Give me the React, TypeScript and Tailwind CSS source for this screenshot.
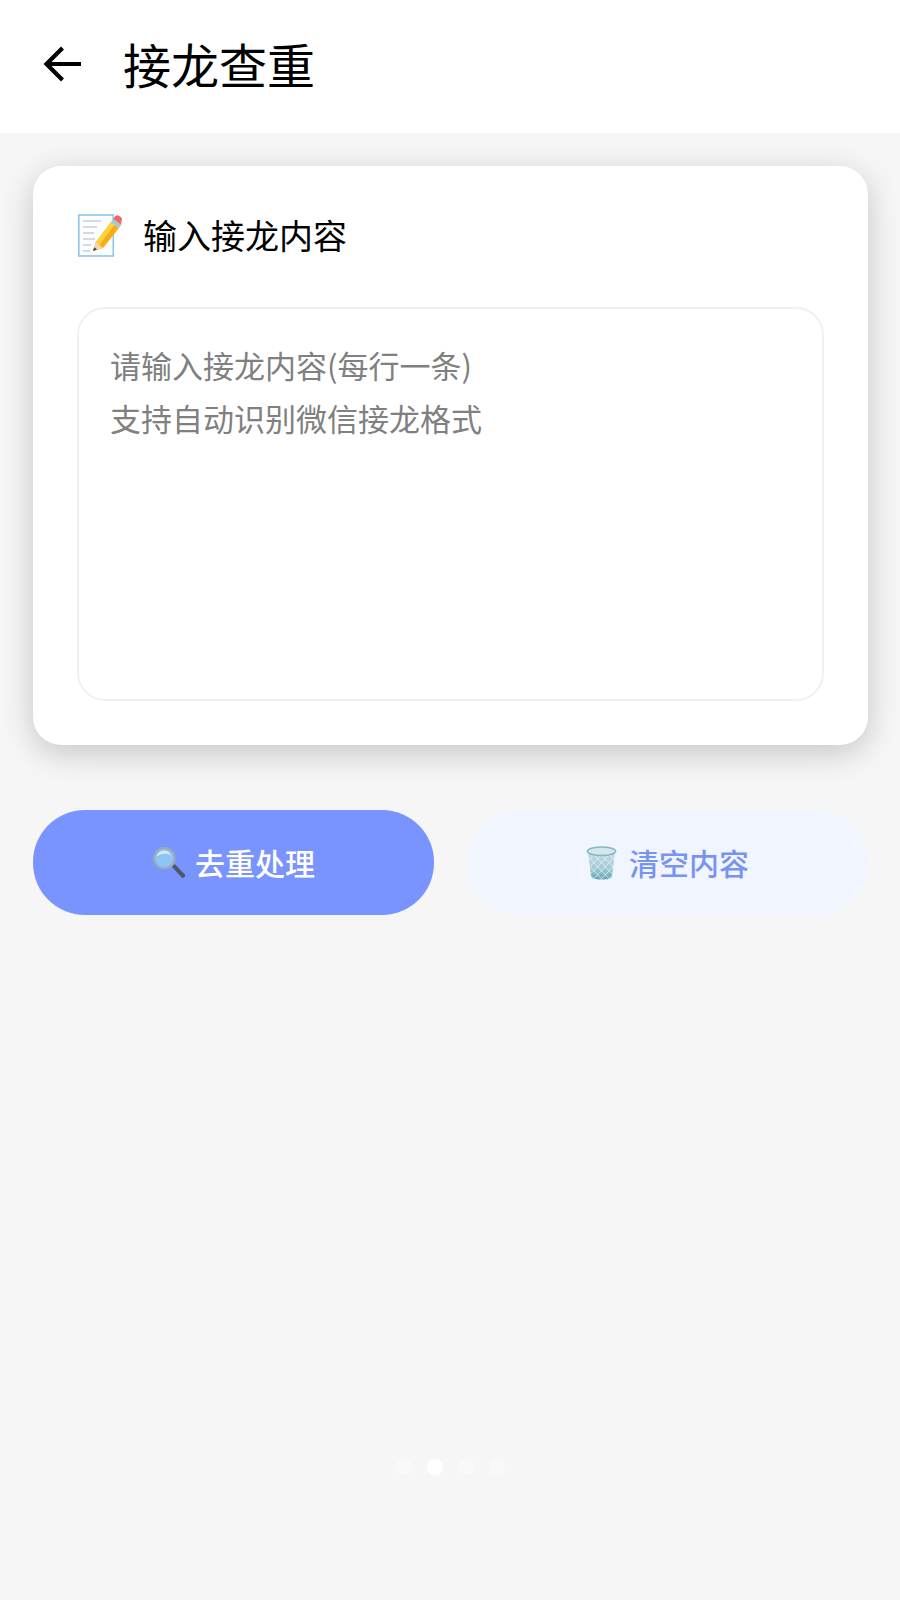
import React from "react";

const cjk = "font-['Noto_Sans_CJK_SC','Noto_Sans',sans-serif]";

function BackArrow() {
  return (
    <svg width="40" height="40" viewBox="0 0 40 40" fill="none" stroke="#000" strokeWidth="4.2">
      <path d="M39 20H5" />
      <path d="M20.500 4L4.500 20l16 16" />
    </svg>
  );
}

function MemoIcon() {
  return (
    <svg width="44" height="44" viewBox="0 0 44 44" className="ml-[1px] shrink-0">
      <rect x="0.800" y="2" width="34.500" height="41" fill="#fbfdff" stroke="#8cc6ea" strokeWidth="1.600" />
      <path d="M5 8h18M5 14h14M5 20h11M5 26h12M5 32h8M5 38h7" stroke="#b5b5b5" strokeWidth="1" />
      <path d="M15 38l3-9L33 9l8 6-16 20z" fill="#f7ae16" />
      <path d="M18 29L33 9l3.500 2.700-15 20z" fill="#fdd23f" />
      <path d="M15 38l3-9 7 6z" fill="#f3d7a8" />
      <path d="M15 38l1.200-3.800 2.800 2.300z" fill="#3f3f3f" />
      <path d="M33 9l2.200-3 8 6-2.200 3z" fill="#9ccbdc" />
      <path d="M35.200 6l1.800-2.500c1-1.300 2.800-1.600 4.200-.6l1.600 1.200c1.300 1 1.600 2.800.6 4.200L43.200 12z" fill="#ec6a6a" />
    </svg>
  );
}

function SearchIcon() {
  return (
    <svg width="34" height="34" viewBox="0 0 36 36" className="shrink-0">
      <path d="M21 22l3-3 11 11.500c1 1.200-2 4.200-3.200 3.200z" fill="#4b5a66" />
      <circle cx="13" cy="13" r="12" fill="#9aa9b4" />
      <circle cx="13" cy="13" r="9.800" fill="#8cc5f3" />
      <path d="M5 11c1-4 4.500-6 8-6s6 2 7 5c-4-2.500-10-2.500-15 1z" fill="#d5ebfb" />
    </svg>
  );
}

function TrashIcon() {
  return (
    <svg width="31" height="34" viewBox="0 0 34 36" preserveAspectRatio="none" className="shrink-0">
      <defs>
        <linearGradient id="bin" x1="0" y1="0" x2="0" y2="1">
          <stop offset="0" stopColor="#c4dde3" />
          <stop offset="0.6" stopColor="#a5cbd5" />
          <stop offset="1" stopColor="#5fa3b3" />
        </linearGradient>
        <pattern id="mesh" width="6" height="6" patternUnits="userSpaceOnUse" patternTransform="rotate(45)">
          <path d="M0 0h6M0 0v6" stroke="#e6f2f5" strokeWidth="1.600" strokeOpacity="0.8" />
        </pattern>
      </defs>
      <path d="M2 5l3.500 27c.3 2.500 5 3.500 11.500 3.500S28.200 34.500 28.500 32L32 5z" fill="url(#bin)" />
      <path d="M2 5l3.500 27c.3 2.500 5 3.500 11.500 3.500S28.200 34.500 28.500 32L32 5z" fill="url(#mesh)" />
      <ellipse cx="17" cy="5.500" rx="15.500" ry="4.500" fill="#d3e6ea" stroke="#85b7c3" strokeWidth="1.600" />
    </svg>
  );
}

export default function App() {
  return (
    <div className={`flex h-[1600px] w-[900px] flex-col bg-[#f6f6f6] ${cjk}`}>
      {/* Title bar */}
      <div className="flex h-[133px] shrink-0 items-center bg-white pb-[5px] pl-[42px]">
        <BackArrow />
        <h1 className="mb-[3px] ml-[41px] text-[48px] leading-none font-normal text-black">接龙查重</h1>
      </div>

      <div className="flex flex-1 flex-col pt-[33px] pl-[33px]">
        {/* Input card */}
        <div className="flex h-[579px] w-[835px] flex-col rounded-[28px] bg-white px-[44px] pt-[46px] pb-[44px] shadow-[0_8px_32px_rgba(0,0,0,0.2)]">
          <div className="flex h-[46px] items-center gap-[21px]">
            <MemoIcon />
            <span className="text-[34px] leading-none font-normal text-black">输入接龙内容</span>
          </div>
          <div className="mt-[49px] flex-1 rounded-[28px] border-2 border-[#f0f0f0] px-[31px] pt-[29px] text-[31px] leading-[53px] text-[#808080]">
            <p>请输入接龙内容(每行一条)</p>
            <p>支持自动识别微信接龙格式</p>
          </div>
        </div>

        {/* Actions */}
        <div className="mt-[65px] flex w-[835px] gap-[33px]">
          <button className="flex h-[105px] flex-1 items-center justify-center gap-[9px] rounded-[52px] bg-[#7993ff] text-[30px] font-medium text-white">
            <SearchIcon />
            去重处理
          </button>
          <button className="flex h-[105px] flex-1 items-center justify-center gap-[12px] rounded-[52px] bg-[#f1f5ff] text-[30px] font-medium text-[#7993f0]">
            <TrashIcon />
            清空内容
          </button>
        </div>

        {/* Pager dots */}
        <div className="mt-auto mb-[125px] ml-[-33px] flex justify-center gap-[15px]">
          <span className="h-[16px] w-[16px] rounded-full bg-[#f9f9f9]" />
          <span className="h-[16px] w-[16px] rounded-full bg-white" />
          <span className="h-[16px] w-[16px] rounded-full bg-[#f9f9f9]" />
          <span className="h-[16px] w-[16px] rounded-full bg-[#f9f9f9]" />
        </div>
      </div>
    </div>
  );
}
